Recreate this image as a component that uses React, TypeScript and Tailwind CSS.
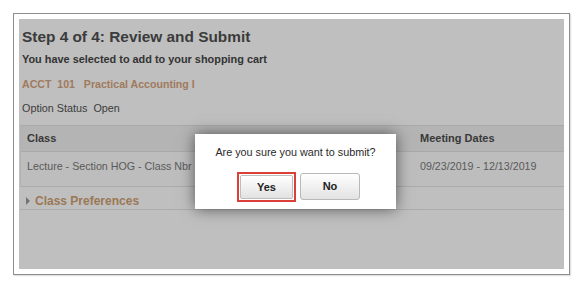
import React from 'react';

// Enrollment review step, dimmed behind a confirmation dialog.
const FONT = { fontFamily: '"Liberation Sans", Arial, sans-serif' };

const ConfirmDialog: React.FC = () => (
  <div className="absolute left-[176px] top-[115px] w-[201px] h-[75px] bg-white shadow-[0_0_14px_rgba(0,0,0,0.55)] pt-[11px] flex flex-col">
    <div className="text-[10.8px] leading-[14px] text-[#2a2a2a] text-center">
      Are you sure you want to submit?
    </div>
    <div className="flex items-start gap-[4px] pl-[42px] mt-[13px]">
      {/* red highlight around the Yes button */}
      <div className="border-2 border-[#dc3f38] p-px">
        <button
          type="button"
          className="block w-[53px] h-[24px] rounded-[2px] border border-[#bdbdbd] bg-gradient-to-b from-white to-[#e2e2e2] text-[11px] font-bold text-[#222]"
        >
          Yes
        </button>
      </div>
      <button
        type="button"
        className="mt-px w-[60px] h-[27px] rounded-[3px] border border-[#b9b9b9] bg-gradient-to-b from-white to-[#e2e2e2] text-[11px] font-bold text-[#222]"
      >
        No
      </button>
    </div>
  </div>
);

export default function App() {
  return (
    <div className="w-[586px] h-[291px] bg-white pt-[13px] pl-[13px]" style={FONT}>
      <div className="w-[557px] h-[262px] border border-[#8e8e8e] shadow-[1px_1px_1px_rgba(0,0,0,0.12)] bg-white p-[5px]">
        <div className="relative h-full bg-[#bfbfbf] pl-[3px] pt-[9px] flex flex-col">
          <div className="text-[15.4px] leading-[18px] font-bold text-[#3b3b3b]">
            Step 4 of 4: Review and Submit
          </div>
          <div className="mt-[6px] text-[10.9px] leading-[14px] font-bold text-[#333]">
            You have selected to add to your shopping cart
          </div>
          <div className="mt-[11px] text-[10.6px] leading-[14px] font-bold text-[#a07a5c] whitespace-pre">
            {'ACCT  101   Practical Accounting I'}
          </div>
          <div className="mt-[10px] text-[10.8px] leading-[14px] text-[#3c3c3c] whitespace-pre">
            {'Option Status  Open'}
          </div>

          {/* Class table */}
          <div className="mt-[10px] -ml-[2px] border-l border-[#b2b2b2] bg-[#bdbdbd]">
            <div className="grid grid-cols-[393px_1fr] h-[27px] items-center bg-[#b4b4b4] border-y border-[#a9a9a9] text-[11px] font-bold text-[#393939]">
              <div className="pl-[6px]">Class</div>
              <div className="pl-[6px]">Meeting Dates</div>
            </div>
            <div className="grid grid-cols-[393px_1fr] h-[35px] pt-[7px] border-b border-[#aaaaaa] text-[10.7px] leading-[14px] text-[#595959]">
              <div className="pl-[6px]">Lecture - Section HOG - Class Nbr</div>
              <div className="pl-[6px]">09/23/2019 - 12/13/2019</div>
            </div>
          </div>
          <div className="-ml-[2px] h-[23px] pt-[7px] border-b border-[#acacac] flex items-start">
            <span className="ml-[6px] mt-[3px] w-0 h-0 border-y-[4px] border-y-transparent border-l-[4px] border-l-[#747474]" />
            <span className="ml-[5px] text-[12px] leading-[14px] font-bold text-[#9b7855]">
              Class Preferences
            </span>
          </div>

          <ConfirmDialog />
        </div>
      </div>
    </div>
  );
}
